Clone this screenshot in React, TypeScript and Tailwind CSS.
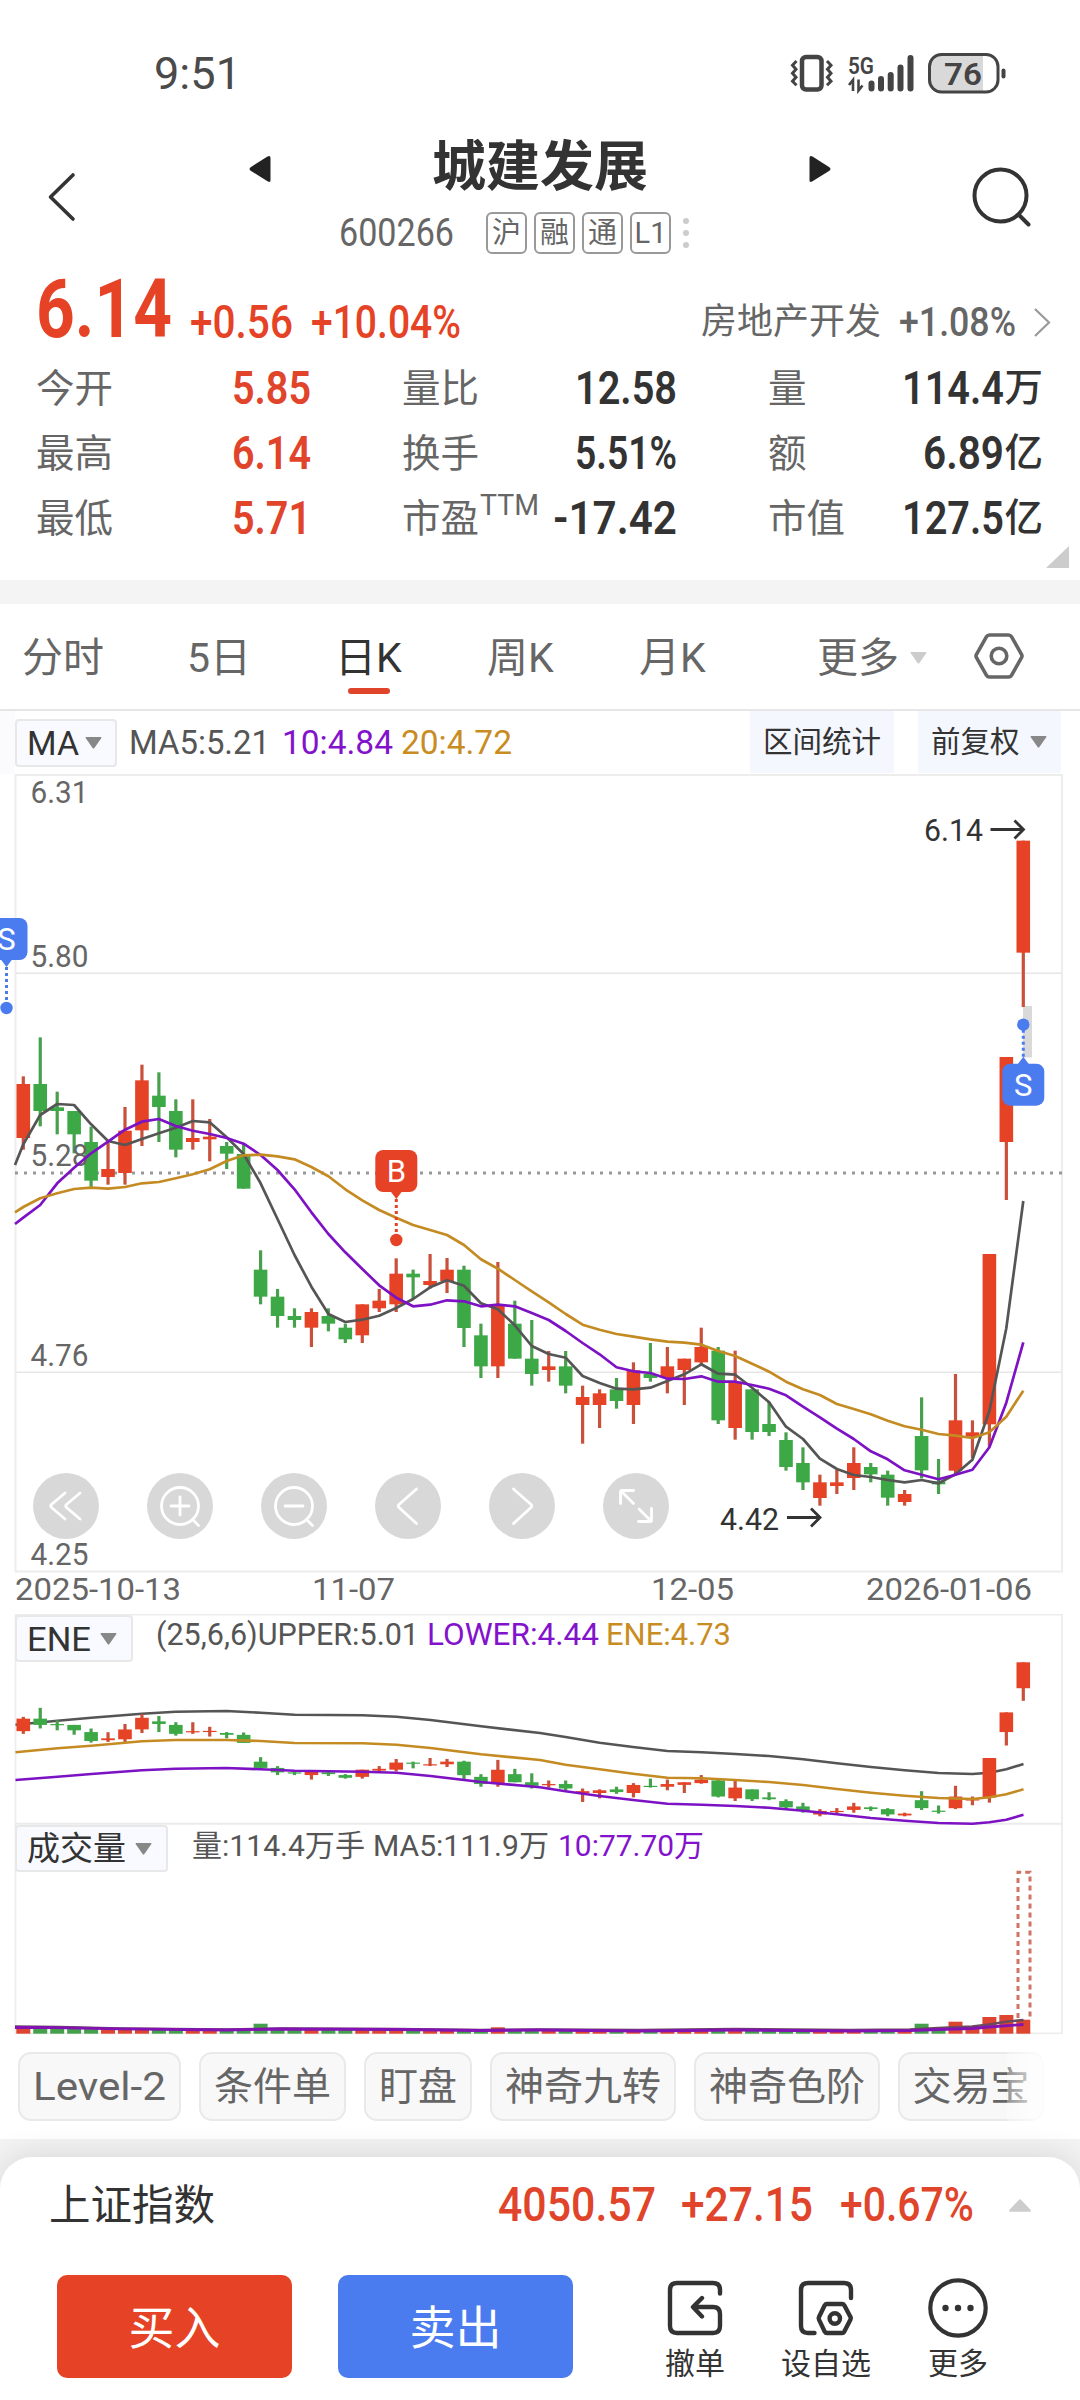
import { useLayoutEffect, useRef, useState } from 'react';
import type { ReactNode } from 'react';

/* ---------- text helper: condenses its content to the width of its box ---------- */
function Fit({ className, children }: { className: string; children: ReactNode }) {
  const outer = useRef<HTMLSpanElement>(null);
  const inner = useRef<HTMLSpanElement>(null);
  const [scale, setScale] = useState(1);
  useLayoutEffect(() => {
    if (outer.current && inner.current) {
      setScale(outer.current.offsetWidth / inner.current.getBoundingClientRect().width);
    }
  }, []);
  return (
    <span ref={outer} className={`block shrink-0 whitespace-nowrap ${className}`}>
      <span ref={inner} className="inline-block origin-left align-top" style={{ transform: `scaleX(${scale})` }}>
        {children}
      </span>
    </span>
  );
}

/* ---------- chart data (y values in thirds of a pixel below a base line) ---------- */
const X0 = 23.3;
const STEP = 16.949;
const cx = (i: number) => X0 + i * STEP;

type Raw = [number, number, number, number, number]; // up, bodyTop, bodyBottom, high, low
type Group = { base: number; rows: Raw[] };

const groups: Group[] = [
  {
    base: 900,
    rows: [
      [1, 552, 714, 529, 749], [0, 552, 633, 412, 679], [0, 622, 633, 575, 703], [0, 633, 703, 633, 760],
      [0, 726, 842, 680, 862], [1, 807, 831, 728, 854], [1, 692, 819, 621, 854], [1, 541, 691, 494, 738],
      [0, 587, 621, 517, 726], [0, 633, 749, 598, 772], [1, 714, 726, 598, 749], [1, 710, 718, 657, 784],
      [0, 738, 761, 726, 807], [0, 762, 866, 731, 866], [0, 1109, 1190, 1051, 1213], [0, 1190, 1248, 1167, 1283],
      [0, 1248, 1260, 1225, 1283], [1, 1236, 1283, 1225, 1341], [0, 1248, 1271, 1225, 1294], [0, 1283, 1318, 1271, 1329],
      [1, 1213, 1306, 1213, 1329], [1, 1202, 1225, 1167, 1236], [1, 1121, 1213, 1075, 1236],
    ],
  },
  {
    base: 1100,
    rows: [
      [0, 521, 532, 509, 596], [1, 543, 555, 462, 566], [1, 509, 543, 474, 579], [0, 509, 684, 497, 741],
      [0, 706, 799, 671, 834], [1, 614, 799, 486, 834], [0, 671, 776, 602, 776], [0, 776, 822, 660, 857],
      [1, 799, 810, 753, 845], [0, 799, 857, 753, 880], [1, 891, 915, 857, 1031], [1, 880, 915, 868, 984],
      [0, 868, 903, 834, 926], [1, 811, 915, 787, 972], [0, 822, 834, 729, 845], [1, 799, 834, 741, 880],
      [1, 776, 810, 776, 915], [1, 741, 787, 683, 795], [0, 752, 961, 741, 972], [1, 845, 984, 752, 1019],
      [0, 868, 996, 868, 1019],
    ],
  },
  {
    base: 1200,
    rows: [
      [0, 672, 696, 605, 708], [0, 720, 801, 697, 812], [0, 789, 847, 742, 870], [1, 847, 894, 824, 917],
      [1, 847, 858, 810, 882], [1, 789, 834, 742, 870], [0, 801, 823, 789, 847], [0, 824, 893, 812, 917],
      [1, 882, 906, 870, 917], [0, 708, 811, 592, 835], [0, 844, 853, 777, 882], [1, 661, 812, 522, 824],
      [1, 697, 710, 661, 774], [1, 162, 673, 162, 740],
    ],
  },
  { base: 780, rows: [[1, 831, 1086, 831, 1260], [1, 182, 518, 182, 681]] },
];

const candles = groups.flatMap((g) =>
  g.rows.map(([up, t, b, h, l]) => ({
    up: up === 1,
    top: g.base + t / 3,
    bottom: g.base + b / 3,
    high: g.base + h / 3,
    low: g.base + l / 3,
  })),
);

const line = (edge: number, parts: [number, number[]][]) => {
  const ys = parts.flatMap(([base, v]) => v.map((p) => base + p / 3));
  return [`15,${(900 + edge / 3).toFixed(1)}`, ...ys.map((y, i) => `${cx(i).toFixed(1)},${y.toFixed(1)}`)].join(' ');
};

const ma5 = line(795, [
  [900, [733, 645, 612, 615, 673, 723, 735, 717, 700, 683, 663, 667, 712, 762, 850, 957, 1065, 1160, 1242, 1266, 1259, 1247]],
  [1100, [624, 597, 562, 541, 557, 610, 628, 676, 738, 762, 773, 828, 849, 866, 868, 863, 843, 823, 793, 821, 824, 863]],
  [1200, [607, 680, 717, 776, 807, 825, 831, 840, 847, 840, 850, 823, 779, 633, 385, 3]],
]);
const ma10 = line(972, [
  [900, [953, 915, 850, 803, 760, 725, 689, 665, 657, 678, 692, 702, 714, 731, 765, 810, 868, 937, 1002, 1057, 1107, 1156]],
  [1100, [593, 619, 614, 601, 604, 619, 614, 619, 639, 660, 693, 729, 763, 802, 814, 819, 836, 837, 829, 845, 845, 855]],
  [1200, [566, 586, 620, 652, 686, 717, 754, 778, 811, 824, 838, 824, 809, 742, 608, 427]],
]);
const ma20 = line(937, [
  [900, [921, 895, 880, 867, 863, 866, 861, 850, 846, 835, 823, 808, 783, 766, 764, 769, 778, 801, 829, 868, 901, 930]],
  [1100, [353, 375, 390, 405, 435, 478, 506, 540, 574, 607, 642, 674, 689, 702, 710, 718, 725, 728, 734, 753, 768, 791]],
  [1200, [515, 545, 568, 585, 612, 627, 643, 662, 679, 689, 702, 707, 714, 697, 650, 572]],
]);

const eneX = [
  15.5, 57.5, 91.3, 141.9, 175.6, 226.3, 260.7, 294.5, 362.6, 396.4, 430.5, 481.1, 540, 565.5, 599.6, 633, 667.4,
  701.9, 735.3, 769, 803.1, 836.9, 871, 904.7, 938.5, 972.5, 989.4, 1006.3, 1023.5,
];
const enePath = (v: number[]) => v.map((y, i) => `${eneX[i]},${(1640 + y / 3).toFixed(1)}`).join(' ');
const eneUpper = enePath([254, 242, 233, 221, 215, 213, 218, 224, 226, 230, 240, 259, 279, 291, 308, 321, 333, 337, 342, 348, 358, 370, 381, 391, 399, 402, 398, 388, 372]);
const eneMid = enePath([337, 325, 317, 304, 300, 300, 303, 309, 310, 314, 324, 343, 360, 374, 388, 401, 413, 415, 420, 426, 435, 447, 458, 467, 474, 477, 472, 463, 448]);
const eneLower = enePath([420, 410, 402, 391, 386, 384, 388, 392, 395, 398, 408, 426, 442, 454, 468, 480, 491, 494, 498, 503, 512, 523, 534, 542, 549, 551, 547, 539, 524]);
const eneY = (y: number) => 1662.3 + (y - 840.7) * 0.2316;

const volumeTop: Record<number, number> = { 0: 2028, 14: 2023.7, 28: 2027.3, 42: 2028.5, 53: 2023.7, 54: 2029, 55: 2021.7, 56: 2026.5, 57: 2017, 58: 2015, 59: 2019.7 };

const RED = '#e64225';
const GREEN = '#3ca946';

function CandleSet({ map = (y: number) => y, minBody = 2 }: { map?: (y: number) => number; minBody?: number }) {
  return (
    <>
      {candles.map((c, i) => {
        const t = map(c.top);
        const b = Math.max(map(c.bottom), t + minBody);
        return (
          <g key={i} fill={c.up ? RED : GREEN}>
            <rect x={cx(i) - 1.6} y={map(c.high)} width={3.2} height={map(c.low) - map(c.high)} fill={c.up ? '#c9503a' : '#48a04c'} />
            <rect x={cx(i) - 6.8} y={t} width={13.6} height={b - t} />
          </g>
        );
      })}
    </>
  );
}

function Marker({ x, boxY, dotY, label, color }: { x: number; boxY: number; dotY: number; label: string; color: string }) {
  const down = dotY > boxY;
  const edge = down ? boxY + 41 : boxY + 1;
  const tip = down ? edge + 8 : edge - 8;
  return (
    <g fill={color}>
      <rect x={x - 21} y={boxY} width={42} height={42} rx={8} />
      <polygon points={`${x - 6},${edge} ${x + 6},${edge} ${x},${tip}`} />
      <line x1={x} x2={x} y1={tip} y2={dotY} stroke={color} strokeWidth={3} strokeDasharray="3 3" />
      <circle cx={x} cy={dotY} r={6.2} />
      <text x={x} y={boxY + 32} textAnchor="middle" fontSize={31} fill="#fff">{label}</text>
    </g>
  );
}

function AxisText({ x, y, w, children, fill = '#666' }: { x: number; y: number; w: number; children: string; fill?: string }) {
  return (
    <text x={x} y={y + 11} fontSize={31} fill={fill} textLength={w} lengthAdjust="spacingAndGlyphs">
      {children}
    </text>
  );
}

function PriceChart() {
  return (
    <svg className="block" width="1080" height="840" viewBox="0 774 1080 840">
      <rect x="15.5" y="775" width="1046.5" height="796.5" fill="none" stroke="#ededed" strokeWidth="2" />
      <path d="M16 973.3H1061M16 1372.3H1061" stroke="#e6e6e6" strokeWidth="1.4" />
      <path d="M15 1173H1062" stroke="#999" strokeWidth="3" strokeDasharray="3 6" />
      <AxisText x={30.5} y={792} w={58}>6.31</AxisText>
      <AxisText x={30.500} y={956} w={58}>5.80</AxisText>
      <AxisText x={30.500} y={1355} w={58}>4.76</AxisText>
      <AxisText x={30.500} y={1554} w={58}>4.25</AxisText>
      <rect x="1023" y="1006" width="9" height="51.5" fill="#d9d9d9" />
      <CandleSet />
      <AxisText x={30.500} y={1155} w={58}>5.28</AxisText>
      <g fill="none" strokeWidth="2.7" strokeLinejoin="round">
        <polyline points={ma5} stroke="#555" />
        <polyline points={ma10} stroke="#7d12c4" />
        <polyline points={ma20} stroke="#c58b23" />
      </g>
      <Marker x={6.5} boxY={918} dotY={1008} label="S" color="#4a7cf0" />
      <Marker x={396.3} boxY={1150} dotY={1240} label="B" color={RED} />
      <Marker x={1023.3} boxY={1063.7} dotY={1024.7} label="S" color="#4a7cf0" />
      <AxisText x={924} y={830} w={59} fill="#333">6.14</AxisText>
      <AxisText x={720} y={1519} w={59} fill="#333">4.42</AxisText>
      <path d="M990.5 829.5H1023M1014.5 820.5L1023.5 829.5L1014.5 838.5M787 1517.5H820M811 1508.5L820 1517.5L811 1526.5" fill="none" stroke="#333" strokeWidth="2.8" />
      <AxisText x={15} y={1589} w={166}>2025-10-13</AxisText>
      <AxisText x={312} y={1589} w={83}>11-07</AxisText>
      <AxisText x={651} y={1589} w={83}>12-05</AxisText>
      <AxisText x={866} y={1589} w={166}>2026-01-06</AxisText>
    </svg>
  );
}

const Tri = ({ className = '' }: { className?: string }) => (
  <svg className={className} width="17" height="12" viewBox="0 0 17 12">
    <path d="M1.500 0h14q1.500 0 .7 1.300L9.400 11q-.9 1.200-1.800 0L.8 1.300Q0 0 1.500 0z" fill="currentColor" />
  </svg>
);

function RoundButton({ children }: { children: ReactNode }) {
  return (
    <button className="h-[66px] w-[66px] rounded-full bg-[#d8d8d8]">
      <svg width="66" height="66" viewBox="0 0 66 66" fill="none" stroke="#fff" strokeWidth="2.800" strokeLinecap="round" strokeLinejoin="round">
        {children}
      </svg>
    </button>
  );
}

function StatusBar() {
  return (
    <div className="flex h-[146px] items-center pt-[2px] pl-[154px] pr-[73px] text-[#4a4a4a]">
      <Fit className="w-[87px] text-[44px] leading-[44px]">9:51</Fit>
      <svg className="-mt-[2px] ml-auto" width="218" height="42" viewBox="789 52 218 42" fill="none" stroke="#444">
        <rect x="802" y="57" width="19.500" height="32.500" rx="4" strokeWidth="4.500" />
        <path d="M796.500 61l-4 4.200 3.500 4-3.500 4 3.500 4-3.500 4 4 4M827 61l4 4.200-3.500 4 3.500 4-3.500 4 3.500 4-4 4" strokeWidth="3" />
        <text x="848" y="73.500" fontSize="24" fontWeight="600" fill="#444" stroke="none" textLength="26" lengthAdjust="spacingAndGlyphs">5G</text>
        <path d="M853 91V80l-4 5M858.500 79.500v11l4-5" strokeWidth="2.600" />
        <path d="M871.500 83.500v5M881 79v9.500M890.700 75v13.500M900.500 67.500v21M910.500 58v30.500" strokeWidth="6" strokeLinecap="round" />
        <path d="M942 55h41v36h-41q-12 0-12-12V67q0-12 12-12z" fill="#d9d9d9" stroke="none" />
        <rect x="929.500" y="54.500" width="68.500" height="37.500" rx="12" strokeWidth="3" />
        <path d="M1003.500 70.500v6" strokeWidth="4" strokeLinecap="round" />
        <text x="944" y="84.700" fontSize="32" fontWeight="600" fill="#444" stroke="none" textLength="38" lengthAdjust="spacingAndGlyphs">76</text>
      </svg>
    </div>
  );
}

function Header() {
  return (
    <header className="flex h-[124px] pl-[46px] pr-[48px]">
      <svg className="mt-[26px]" width="32" height="50" viewBox="0 0 32 50" fill="none" stroke="#333" strokeWidth="3.600" strokeLinecap="round" strokeLinejoin="round">
        <path d="M27 3L4.500 25 27 47" />
      </svg>
      <div className="ml-[171px] flex w-[582px] flex-col">
        <div className="-mt-[13px] flex h-[66px] items-center justify-between">
          <svg className="mt-[6px]" width="22" height="28" viewBox="0 0 22 28"><path d="M21.500 3v22q0 3-3 1.200L2 16q-3-2 0-4L18.500 1.500Q21.500 0 21.500 3z" fill="#222" /></svg>
          <h1 className="pt-[3px] text-[54px] leading-[66px] font-bold text-[#333]">城建发展</h1>
          <svg className="mt-[6px]" width="22" height="28" viewBox="0 0 22 28"><path d="M.5 3v22q0 3 3 1.200L20 16q3-2 0-4L3.500 1.500Q.5 0 .5 3z" fill="#222" /></svg>
        </div>
        <div className="mt-[13px] flex h-[42px] items-center pl-[90px] text-[#666]">
          <Fit className="w-[115px] text-[39px] leading-[42px]">600266</Fit>
          <div className="ml-[32px] flex gap-[7px]">
            {['沪', '融', '通', 'L1'].map((t) => (
              <span key={t} className="flex h-[42px] w-[41px] items-center justify-center rounded-[6px] border-2 border-[#999] text-[29px] leading-[38px]">
                {t}
              </span>
            ))}
          </div>
          <div className="ml-[12px] flex flex-col gap-[6px]">
            {[0, 1, 2].map((i) => <i key={i} className="h-[6px] w-[6px] rounded-full bg-[#ccc]" />)}
          </div>
        </div>
      </div>
      <svg className="mt-[20px] ml-auto" width="62" height="62" viewBox="970 166 62 62" fill="none" stroke="#333" strokeWidth="4" strokeLinecap="round">
        <circle cx="1000.500" cy="195.500" r="26" />
        <path d="M1018.500 214.500l10 10" />
      </svg>
    </header>
  );
}

const Num = ({ className, children }: { className: string; children: string }) => (
  <Fit className={`text-[46px] leading-[65px] font-semibold ${className}`}>{children}</Fit>
);

function Quote() {
  const label = 'text-[38.500px] leading-[65px] text-[#666]';
  const unit = 'text-[38.500px] leading-[64px] font-medium';
  return (
    <section className="relative h-[310px] text-[#333]">
      <div className="flex h-[86px] items-start pl-[36px] text-[#e64225]">
        <Fit className="w-[136px] text-[81px] leading-[79px] font-bold">6.14</Fit>
        <Fit className="ml-[18px] mt-[19px] w-[103px] text-[46px] leading-[66px] font-medium">+0.56</Fit>
        <Fit className="ml-[18px] mt-[19px] w-[150px] text-[46px] leading-[66px] font-medium">+10.04%</Fit>
        <div className="ml-[240px] mt-[19px] flex items-center text-[#666]">
          <span className="text-[36px] leading-[66px]">房地产开发</span>
          <Fit className="ml-[18px] w-[117px] text-[41px] leading-[66px] font-medium">+1.08%</Fit>
          <svg className="ml-[17px]" width="19" height="29" viewBox="0 0 19 29" fill="none" stroke="#999" strokeWidth="2.200"><path d="M2 1l14 13.500L2 28" /></svg>
        </div>
      </div>
      <div className="grid grid-cols-[275px_275px_275px] gap-x-[91px] pl-[36px]">
        <div className="flex justify-between"><span className={label}>今开</span><Num className="w-[79px] text-[#e0442a]">5.85</Num></div>
        <div className="flex justify-between"><span className={label}>量比</span><Num className="w-[102px]">12.58</Num></div>
        <div className="flex justify-between"><span className={label}>量</span><span className="flex"><Num className="w-[102px]">114.4</Num><span className={unit}>万</span></span></div>
        <div className="flex justify-between"><span className={label}>最高</span><Num className="w-[79px] text-[#e0442a]">6.14</Num></div>
        <div className="flex justify-between"><span className={label}>换手</span><Num className="w-[102px]">5.51%</Num></div>
        <div className="flex justify-between"><span className={label}>额</span><span className="flex"><Num className="w-[81px]">6.89</Num><span className={unit}>亿</span></span></div>
        <div className="flex justify-between"><span className={label}>最低</span><Num className="w-[79px] text-[#e0442a]">5.71</Num></div>
        <div className="flex justify-between">
          <span className="flex"><span className={label}>市盈</span><Fit className="ml-[1px] mt-[2px] w-[59px] text-[29px] leading-[34px] text-[#666]">TTM</Fit></span>
          <Num className="w-[124px]">-17.42</Num>
        </div>
        <div className="flex justify-between"><span className={label}>市值</span><span className="flex"><Num className="w-[102px]">127.5</Num><span className={unit}>亿</span></span></div>
      </div>
      <svg className="absolute right-[11px] bottom-[12px]" width="23" height="22" viewBox="0 0 23 22"><path d="M23 0v22H0z" fill="#ccc" /></svg>
    </section>
  );
}

function Tabs() {
  const t = 'text-[41px] leading-[54px]';
  return (
    <nav className="flex h-[107px] border-b-2 border-[#e6e6e6] pt-[27px] pl-[22px] text-[#666]">
      <span className={`w-[165px] ${t}`}>分时</span>
      <span className={`w-[148px] ${t}`}>5日</span>
      <span className={`flex w-[152px] flex-col text-[#333] ${t}`}>
        日K
        <i className="mt-[3px] ml-[13px] h-[6px] w-[42px] rounded-[3px] bg-[#e0442a]" />
      </span>
      <span className={`w-[152px] ${t}`}>周K</span>
      <span className={`w-[178px] ${t}`}>月K</span>
      <span className={`flex h-[54px] w-[157px] items-center ${t}`}>
        更多
        <Tri className="ml-[11px] text-[#ccc]" />
      </span>
      <svg width="50" height="52" viewBox="974 631 50 52" fill="none" stroke="#666" strokeWidth="3.600">
        <path d="M989.500 635h19q2 0 3 1.700l10 17.600q1 1.700 0 3.400l-10 17.600q-1 1.700-3 1.700h-19q-2 0-3-1.700l-10-17.600q-1-1.700 0-3.400l10-17.600q1-1.700 3-1.700z" />
        <circle cx="999" cy="656" r="7.800" />
      </svg>
    </nav>
  );
}

const boxCls = 'flex items-center rounded-[4px] border-2 border-[#e8e8e8] bg-[#f8faff] text-[#333]';

function ChartToolbar() {
  return (
    <div className="flex h-[63px] bg-[linear-gradient(90deg,#fbfbfe_15px,#fff_15px)] pl-[15px] text-[33px]">
      <div className={`mt-[8px] h-[48px] w-[102px] pl-[10px] ${boxCls}`}>
        <Fit className="mt-[2px] w-[52px] text-[33px] leading-[44px]">MA</Fit>
        <Tri className="ml-[6px] text-[#888]" />
      </div>
      <Fit className="ml-[12px] w-[141px] leading-[63px] text-[#555]">MA5:5.21</Fit>
      <Fit className="ml-[12px] w-[111px] leading-[63px] text-[#8312cc]">10:4.84</Fit>
      <Fit className="ml-[8px] w-[111px] leading-[63px] text-[#c88c22]">20:4.72</Fit>
      <button className="ml-[238px] h-[62px] w-[144px] bg-[#f5f7fe] text-[29.500px] leading-[63px] text-[#333]">区间统计</button>
      <button className="ml-[24px] flex h-[62px] w-[143px] items-center bg-[#f5f7fe] pl-[13px] text-[29.500px] leading-[63px] text-[#333]">
        前复权<Tri className="ml-[10px] text-[#888]" />
      </button>
    </div>
  );
}

function PricePanel() {
  return (
    <section className="relative h-[840px]">
      <PriceChart />
      <div className="absolute top-[699px] left-[33px] flex gap-[48px]">
        <RoundButton><path d="M32 20L18.500 31.500q-1.500 1.500 0 3L32 46M47 20L33.500 31.500q-1.500 1.500 0 3L47 46" /></RoundButton>
        <RoundButton><circle cx="33" cy="33" r="18.500" /><path d="M24 33h18M33 24v18M46.500 47.500l5 5" /></RoundButton>
        <RoundButton><circle cx="33" cy="33" r="18.500" /><path d="M24 33h18M46.500 47.500l5 5" /></RoundButton>
        <RoundButton><path d="M41.500 16L24 31.500q-1.500 1.500 0 3L41.500 50.500" /></RoundButton>
        <RoundButton><path d="M24.500 16L42 31.500q1.500 1.500 0 3L24.500 50.500" /></RoundButton>
        <RoundButton><path d="M30.500 17.500H19q-1.500 0-1.500 1.500v11.500M18 18l12.500 12.500M35.500 48.500H47q1.500 0 1.500-1.500V35.500M48 48L36 36" /></RoundButton>
      </div>
    </section>
  );
}

function EnePanel() {
  return (
    <section className="relative h-[210px]">
      <svg className="absolute inset-0" width="1080" height="211" viewBox="0 1614 1080 211">
        <path d="M15.500 1614.500V1825M1062 1614.500V1825M15 1614.700H1063" stroke="#ededed" strokeWidth="1.800" />
        <path d="M15 1823.800H1063" stroke="#ebebeb" strokeWidth="2" />
        <polyline points={eneUpper} fill="none" stroke="#555" strokeWidth="2.600" strokeLinejoin="round" />
        <CandleSet map={eneY} minBody={1.2} />
        <g fill="none" strokeWidth="2.600" strokeLinejoin="round">
          <polyline points={eneMid} stroke="#c58b23" />
          <polyline points={eneLower} stroke="#7d12c4" />
        </g>
      </svg>
      <div className="relative flex pl-[15px] text-[31px] leading-[42px]">
        <div className={`mt-px h-[47px] w-[118px] pl-[10px] ${boxCls}`}>
          <Fit className="mt-[2px] w-[64px] text-[33px] leading-[44px]">ENE</Fit>
          <Tri className="ml-[9px] text-[#888]" />
        </div>
        <Fit className="ml-[23px] w-[263px] text-[#555]">(25,6,6)UPPER:5.01</Fit>
        <Fit className="ml-[8px] w-[172px] text-[#8312cc]">LOWER:4.44</Fit>
        <Fit className="ml-[7px] w-[125px] text-[#c88c22]">ENE:4.73</Fit>
      </div>
    </section>
  );
}

function VolumePanel() {
  return (
    <section className="relative h-[211px]">
      <svg className="absolute inset-0" width="1080" height="211" viewBox="0 1824 1080 211">
        <path d="M15.500 1824V2034M1062 1824V2034M15 2033.300H1063" stroke="#ededed" strokeWidth="1.800" />
        {candles.map((c, i) => {
          const top = volumeTop[i] ?? 2029;
          return <rect key={i} x={cx(i) - 7} y={top} width={14} height={2033.7 - top} fill={c.up ? '#dd4530' : '#45a04c'} />;
        })}
        <path d="M1018 2018V1872.200H1030V2018" fill="none" stroke="#cf7362" strokeWidth="3" strokeDasharray="5 4" />
        <polyline points="15,2026.500 60,2027 120,2028.500 227,2029.500 280,2028.500 396,2029 480,2030 540,2029.500 640,2030 735,2029 850,2030 910,2029.500 938,2028 972,2026.500 989,2024.500 1006,2021.800 1023.500,2020" fill="none" stroke="#6b4a5c" strokeWidth="2.400" />
        <polyline points="15,2027.500 40,2027.300 120,2028.800 227,2030 280,2029 396,2029.500 480,2030.500 540,2030 640,2031 735,2030 850,2031 910,2030.500 938,2029.500 972,2028.500 989,2027 1023.500,2024.500" fill="none" stroke="#8312b4" strokeWidth="2.800" />
      </svg>
      <div className="relative flex pl-[15px] text-[30px] leading-[43px]">
        <div className={`mt-px h-[47px] w-[153px] pl-[10px] ${boxCls}`}>
          <span className="mt-px text-[33px] leading-[44px]">成交量</span>
          <Tri className="ml-[9px] text-[#888]" />
        </div>
        <Fit className="ml-[24px] w-[173px] text-[#555]">量:114.4万手</Fit>
        <Fit className="ml-[8px] w-[176px] text-[#555]">MA5:111.9万</Fit>
        <Fit className="ml-[9px] w-[146px] text-[#8312cc]">10:77.70万</Fit>
      </div>
    </section>
  );
}

function Chips() {
  return (
    <div className="relative flex h-[104px] gap-[18px] pt-[17px] pl-[18px] text-[39px] leading-[67px] text-[#666]">
      {[
        ['Level-2', 'w-[163px]'], ['条件单', 'w-[147px]'], ['盯盘', 'w-[108px]'],
        ['神奇九转', 'w-[186px]'], ['神奇色阶', 'w-[186px]'], ['交易宝', 'w-[146px]'],
      ].map(([t, w]) => (
        <span key={t} className={`flex h-[69px] shrink-0 justify-center rounded-[13px] border-2 border-[#e9e9e9] bg-[#f8f8f8] ${w}`}>
          {t === 'Level-2' ? <Fit className="w-[133px]">{t}</Fit> : t}
        </span>
      ))}
      <i className="absolute top-[10px] left-[1007px] h-[84px] w-[40px] bg-linear-to-r from-white/30 to-white/90" />
    </div>
  );
}

function BottomSheet() {
  const item = 'flex flex-col items-center text-[30px] leading-[41px] text-[#333]';
  return (
    <>
      <div className="h-[48px] bg-[#f3f3f3]" />
      <footer className="relative -mt-[30px] h-[243px] rounded-t-[32px] bg-white shadow-[0_-4px_30px_rgba(0,0,0,0.1)]">
        <div className="flex h-[96px] pl-[49px] text-[49px] leading-[96px] font-medium text-[#e0442a]">
          <span className="w-[449px] pt-px text-[41.500px] font-normal text-[#333]">上证指数</span>
          <Fit className="w-[158px]">4050.57</Fit>
          <Fit className="ml-[25px] w-[132px]">+27.15</Fit>
          <Fit className="ml-[27px] w-[134px]">+0.67%</Fit>
          <svg className="mt-[42px] ml-[35px]" width="22" height="13" viewBox="0 0 22 13"><path d="M10 .8q1-1 2 0l9.500 10q1 2-1 2h-19q-2 0-1-2z" fill="#ccc" /></svg>
        </div>
        <div className="flex pt-[22px] pl-[57px] text-[46px] text-white">
          <button className="h-[103px] w-[235px] rounded-[10px] bg-[#e64225] pt-[3px]">买入</button>
          <button className="ml-[46px] h-[103px] w-[235px] rounded-[10px] bg-[#4a7cf0] pt-[3px]">卖出</button>
          <div className={`ml-[91px] w-[62px] ${item}`}>
            <svg width="62" height="68" viewBox="664 2273 62 68" fill="none" stroke="#333" strokeWidth="4.400" strokeLinecap="round" strokeLinejoin="round">
              <path d="M720 2291.500v-3.500q0-7-7-7h-36q-7 0-7 7v36q0 7 7 7h36q7 0 7-7v-12q0-7-7-7h-19M702 2296l-9 9 9 9.500" />
            </svg>
            撤单
          </div>
          <div className={`ml-[54px] w-[92px] ${item}`}>
            <svg width="62" height="68" viewBox="795 2273 62 68" fill="none" stroke="#333" strokeWidth="4.400" strokeLinecap="round" strokeLinejoin="round">
              <path d="M851 2296v-8q0-7-7-7h-36q-7 0-7 7v36q0 7 7 7h6.500" />
              <path d="M827 2302h15q1.500 0 2.300 1.300l6.200 11.700q.8 1.300 0 2.600l-6.200 12q-.8 1.400-2.300 1.400h-15q-1.500 0-2.300-1.400l-5.700-12q-.8-1.300 0-2.600l5.700-11.700q.8-1.300 2.300-1.300z" />
              <circle cx="834.800" cy="2316.500" r="5.200" />
            </svg>
            设自选
          </div>
          <div className={`ml-[55px] w-[62px] ${item}`}>
            <svg width="64" height="68" viewBox="926 2273 64 68" fill="none" stroke="#333" strokeWidth="4.200">
              <circle cx="958" cy="2306" r="27.700" />
              <g fill="#333" stroke="none"><circle cx="945.500" cy="2306" r="3.200" /><circle cx="958" cy="2306" r="3.200" /><circle cx="970.500" cy="2306" r="3.200" /></g>
            </svg>
            更多
          </div>
        </div>
      </footer>
    </>
  );
}

export default function App() {
  return (
    <div className="h-[2400px] w-[1080px] overflow-hidden bg-white font-['Roboto','Noto_Sans_CJK_SC',sans-serif]">
      <StatusBar />
      <Header />
      <Quote />
      <div className="h-[24px] bg-[#f4f4f4]" />
      <Tabs />
      <ChartToolbar />
      <PricePanel />
      <EnePanel />
      <VolumePanel />
      <Chips />
      <BottomSheet />
    </div>
  );
}
